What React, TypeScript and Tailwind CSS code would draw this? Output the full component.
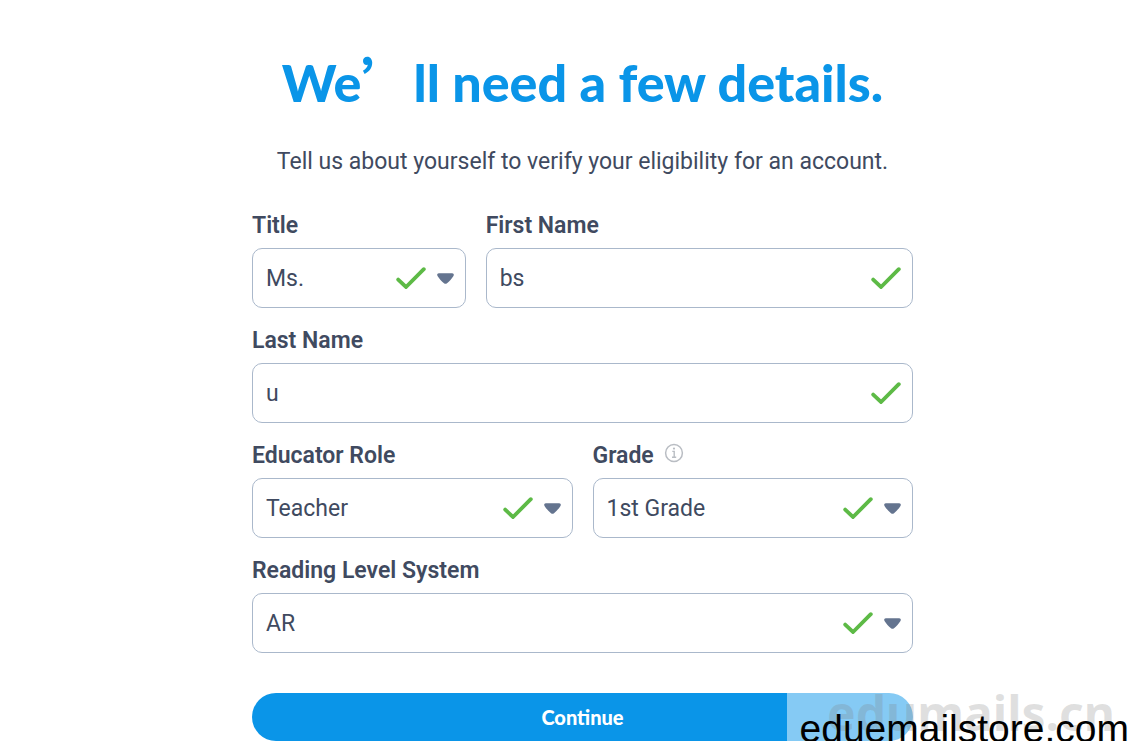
import { useState } from "react";
import type { ReactNode } from "react";

function CheckIcon() {
  return (
    <svg width="30" height="22" viewBox="0 0 30 22" fill="none" aria-hidden="true">
      <path
        d="M2.2 12.6 L10 20 L27.8 2.2"
        stroke="#5dba46"
        strokeWidth="3.8"
        strokeLinecap="round"
        strokeLinejoin="miter"
      />
    </svg>
  );
}

function CaretIcon() {
  return (
    <svg width="17" height="11" viewBox="0 0 17 11" aria-hidden="true">
      <path
        d="M1.8 0.2 H15.2 C16.8 0.2 17.3 2 16.3 3.2 C14.8 5.6 12.4 8.2 10 10.2 C9 11 8 11 7 10.2 C4.6 8.2 2.2 5.6 0.7 3.2 C-0.3 2 0.2 0.2 1.8 0.2 Z"
        fill="#64748f"
      />
    </svg>
  );
}

function InfoIcon() {
  return (
    <svg width="20" height="20" viewBox="0 0 20 20" fill="none" aria-hidden="true">
      <circle cx="10" cy="10" r="8.4" stroke="#b9bdc3" strokeWidth="1.5" />
      <circle cx="10" cy="5.6" r="1.1" fill="#b9bdc3" />
      <path d="M8.3 8.4 H10.2 V14 M8 14.3 H12.2" stroke="#b9bdc3" strokeWidth="1.4" />
    </svg>
  );
}

const controlClass =
  "block w-full h-[60px] appearance-none rounded-[10px] border border-[#aab8cb] bg-white pl-[13px] text-[23px] leading-8 text-[#404a60] outline-none focus:border-[#0a95e8]";

interface FieldProps {
  id: string;
  label: string;
  info?: ReactNode;
  children: ReactNode;
}

function Field({ id, label, info, children }: FieldProps) {
  return (
    <div>
      <div className="mb-[7px] flex items-start gap-2.5">
        <label htmlFor={id} className="text-[23px] leading-[31px] font-semibold">
          {label}
        </label>
        {info}
      </div>
      <div className="relative">{children}</div>
    </div>
  );
}

interface TextFieldProps {
  id: string;
  label: string;
  initial: string;
}

function TextField({ id, label, initial }: TextFieldProps) {
  const [value, setValue] = useState(initial);
  return (
    <Field id={id} label={label}>
      <input
        id={id}
        type="text"
        value={value}
        onChange={(e) => setValue(e.target.value)}
        className={`${controlClass} pr-14`}
      />
      {value && (
        <span className="pointer-events-none absolute inset-y-0 right-3 flex items-center">
          <CheckIcon />
        </span>
      )}
    </Field>
  );
}

interface SelectFieldProps {
  id: string;
  label: string;
  options: string[];
  info?: ReactNode;
}

function SelectField({ id, label, options, info }: SelectFieldProps) {
  const [value, setValue] = useState(options[0]);
  return (
    <Field id={id} label={label} info={info}>
      <select
        id={id}
        value={value}
        onChange={(e) => setValue(e.target.value)}
        className={`${controlClass} pt-0.5 pr-20`}
      >
        {options.map((option) => (
          <option key={option}>{option}</option>
        ))}
      </select>
      <span className="pointer-events-none absolute inset-y-0 right-3 flex items-center gap-[11px]">
        <CheckIcon />
        <CaretIcon />
      </span>
    </Field>
  );
}

export default function App() {
  return (
    <main className="relative bg-white pt-[52px] pl-7 font-['Roboto',sans-serif] text-[#404a60]">
      <div className="mx-auto max-w-[661px]">
        <h1 className="text-center font-['Lato',sans-serif] text-[52px] leading-[56px] font-black whitespace-nowrap text-[#0a95e8]">
          We<span className="font-['Noto_Sans_CJK_SC',sans-serif]">’</span>ll need a few details.
        </h1>
        <p className="mt-9 text-center text-[23px] leading-8 whitespace-nowrap">
          Tell us about yourself to verify your eligibility for an account.
        </p>

        <form className="mt-8" onSubmit={(e) => e.preventDefault()}>
          <div className="flex flex-col gap-[17px]">
            <div className="grid grid-cols-[1fr_2fr] gap-5">
              <SelectField id="title" label="Title" options={["Ms.", "Mr.", "Mrs.", "Dr."]} />
              <TextField id="firstName" label="First Name" initial="bs" />
            </div>
            <TextField id="lastName" label="Last Name" initial="u" />
            <div className="grid grid-cols-2 gap-5">
              <SelectField id="role" label="Educator Role" options={["Teacher", "Librarian"]} />
              <SelectField
                id="grade"
                label="Grade"
                options={["1st Grade", "2nd Grade", "3rd Grade"]}
                info={
                  <button type="button" aria-label="About grades" className="pt-[3px]">
                    <InfoIcon />
                  </button>
                }
              />
            </div>
            <SelectField id="readingLevel" label="Reading Level System" options={["AR", "Lexile"]} />
          </div>
          <button
            type="submit"
            className="mt-10 block h-12 w-full rounded-full bg-[#0a95e8] font-['Lato',sans-serif] text-[20px] font-black text-white"
          >
            Continue
          </button>
        </form>
      </div>

      {/* Watermark */}
      <div className="pointer-events-none absolute right-0 bottom-0 h-16 w-[350px] overflow-hidden whitespace-nowrap">
        <div className="absolute inset-x-0 bottom-0 h-12 bg-white/50" />
        <span className="absolute right-[22px] bottom-0 font-['Noto_Sans',sans-serif] text-[48px] leading-[56px] font-bold text-[#808080]/25">
          edumails.cn
        </span>
        <span className="absolute right-2 -bottom-2 font-['Liberation_Sans',sans-serif] text-[39px] leading-10 text-black">
          eduemailstore.com
        </span>
      </div>
    </main>
  );
}
